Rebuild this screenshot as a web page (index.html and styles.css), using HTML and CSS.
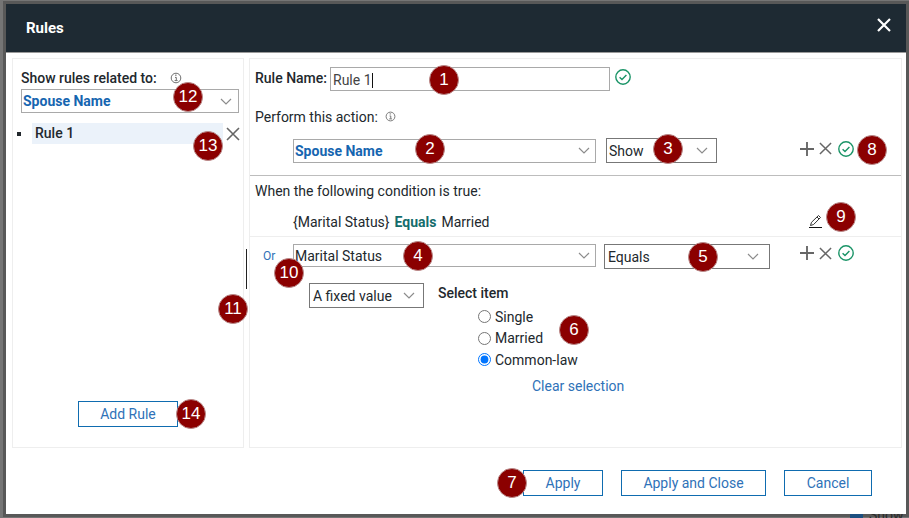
FILE: index.html
```html
<!DOCTYPE html>
<html>
	<head>
		<meta charset="UTF-8">
		<title>Rules</title>
		<link rel="stylesheet" href="styles.css">
	</head>
	<body>
		<svg class="defs" width="0" height="0">
			<symbol id="chev" viewBox="0 0 12 7"><path d="M1 1l5 5 5-5" fill="none" stroke="#8c8c8c" stroke-width="1.2"/></symbol>
			<symbol id="info" viewBox="0 0 12 12"><circle cx="6" cy="6" r="4.8" fill="none" stroke="#6f6f6f"/><path d="M5 3.2h1.6M5 5.4h1.3v3M4.6 8.6h3" fill="none" stroke="#6f6f6f"/></symbol>
			<symbol id="ok" viewBox="0 0 16 16"><circle cx="8" cy="8" r="7.2" fill="none" stroke="#1a9467" stroke-width="1.4"/><path d="M4.6 8.2l2.4 2.4 4.4-4.6" fill="none" stroke="#1a9467" stroke-width="1.4"/></symbol>
			<symbol id="plus" viewBox="0 0 15 15"><path d="M7.5 0v15M0 7.5h15" fill="none" stroke="#666" stroke-width="2"/></symbol>
			<symbol id="cross" viewBox="0 0 14 14"><path d="M1 1l12 12M13 1L1 13" fill="none" stroke="#666" stroke-width="1.6"/></symbol>
		</svg>

		<div class="modal">
			<div class="modal-head">
				<h1>Rules</h1>
				<svg class="close" width="14" height="14"><path d="M1 1l12 12M13 1L1 13" fill="none" stroke="#fff" stroke-width="2.2"/></svg>
			</div>

			<div class="modal-body">
				<!-- left side: list of rules -->
				<div class="panel side">
					<div class="side-title">
						<b>Show rules related to:</b>
						<svg width="12" height="12"><use href="#info"/></svg>
					</div>
					<div class="sel sel-side">
						<span class="blue-bold">Spouse Name</span>
						<svg width="12" height="7"><use href="#chev"/></svg>
					</div>
					<div class="rule-row">
						<i class="bullet"></i>
						<div class="rule-item">Rule 1</div>
						<svg width="14" height="14"><use href="#cross"/></svg>
					</div>
					<div class="side-foot">
						<button class="btn btn-add">Add Rule</button>
					</div>
				</div>

				<!-- right side: the rule editor -->
				<div class="panel editor">
					<div class="name-row">
						<b>Rule Name:</b>
						<div class="name-input">Rule 1<i class="caret"></i></div>
						<svg class="name-ok" width="16" height="16"><use href="#ok"/></svg>
					</div>
					<div class="action-label">
						<span>Perform this action:</span>
						<svg width="11" height="11"><use href="#info"/></svg>
					</div>
					<div class="action-row">
						<div class="sel sel-wide">
							<span class="blue-bold">Spouse Name</span>
							<svg width="12" height="7"><use href="#chev"/></svg>
						</div>
						<div class="sel sel-show">
							<span>Show</span>
							<svg width="12" height="7"><use href="#chev"/></svg>
						</div>
						<div class="tools">
							<svg width="14" height="14"><use href="#plus"/></svg>
							<svg width="13" height="13"><use href="#cross"/></svg>
							<svg width="16" height="16"><use href="#ok"/></svg>
						</div>
					</div>

					<div class="cond-box">
						<div class="cond-title">When the following condition is true:</div>
						<div class="cond-row">
							<span>{Marital Status}</span>
							<b class="green">Equals</b>
							<span>Married</span>
							<svg class="pencil" width="15" height="15" viewBox="0 0 15 15"><path d="M2.500 11.500l1-3.200 7-6.800 2 2-6.900 7z" fill="none" stroke="#333" stroke-width="1"/><path d="M9 3l2 2" fill="none" stroke="#333"/><path d="M1 13.500h13" stroke="#111" stroke-width="1"/></svg>
						</div>
					</div>

					<div class="or-box">
						<div class="or-row">
							<a class="or-link">Or</a>
							<div class="sel sel-wide sel-field">
								<span>Marital Status</span>
								<svg width="12" height="7"><use href="#chev"/></svg>
							</div>
							<div class="sel sel-equals">
								<span>Equals</span>
								<svg width="12" height="7"><use href="#chev"/></svg>
							</div>
							<div class="tools tools-or">
								<svg width="14" height="14"><use href="#plus"/></svg>
								<svg width="13" height="13"><use href="#cross"/></svg>
								<svg width="16" height="16"><use href="#ok"/></svg>
							</div>
						</div>
						<div class="value-row">
							<div class="sel sel-fixed">
								<span>A fixed value</span>
								<svg width="12" height="7"><use href="#chev"/></svg>
							</div>
							<div class="value-pick">
								<div class="pick-title">Select item</div>
								<div class="radios">
									<label><input type="radio" name="item">Single</label>
									<label><input type="radio" name="item">Married</label>
									<label><input type="radio" name="item" checked>Common-law</label>
								</div>
								<a class="clear">Clear selection</a>
							</div>
						</div>
					</div>
				</div>
				<i class="or-line"></i>
			</div>

			<div class="modal-foot">
				<button class="btn btn-apply">Apply</button>
				<button class="btn btn-close">Apply and Close</button>
				<button class="btn btn-cancel">Cancel</button>
			</div>

			<!-- numbered callouts on top of the screenshot -->
			<span class="num n1">1</span>
			<span class="num n2">2</span>
			<span class="num n3">3</span>
			<span class="num n4">4</span>
			<span class="num n5">5</span>
			<span class="num n6">6</span>
			<span class="num n7">7</span>
			<span class="num n8">8</span>
			<span class="num n9">9</span>
			<span class="num n10">10</span>
			<span class="num n11">11</span>
			<span class="num n12">12</span>
			<span class="num n13">13</span>
			<span class="num n14">14</span>
		</div>

		<!-- bit of the page under the dialog -->
		<div class="under">
			<i class="under-check"></i>
			<span>Show</span>
		</div>
	</body>
</html>
```

FILE: styles.css
```css
*{
	box-sizing: border-box;
}
html, body{
	height: 100%;
}
body{
	margin: 0;
	padding: 4px 3px 0 6px;
	background-color: #757575;
	font-family: Roboto, "Liberation Sans", sans-serif;
	font-size: 14px;
	color: #22282d;
	overflow: hidden;
}
svg{
	display: block;
	flex: none;
}
.defs{
	position: absolute;
}
b{
	font-weight: 500;
}

.modal{
	position: relative;
	height: 510px;
	background-color: #fff;
	display: flex;
	flex-direction: column;
	box-shadow: 0 0 0 3px #585858;
}
.modal-head{
	height: 49px;
	background-color: #1e2a33;
	border-bottom: 1px solid #9a9a9a;
	padding: 0 15px 0 20px;
	display: flex;
	align-items: center;
	justify-content: space-between;
	flex: none;
}
.modal-head h1{
	margin: 0;
	font-size: 15px;
	font-weight: 700;
	color: #fff;
}
.close{
	margin-top: -6px;
}

.modal-body{
	position: relative;
	display: flex;
	gap: 5px;
	padding: 5px 4px 0 6px;
}
.panel{
	height: 390px;
	border: 1px solid #eeeeee;
}

/* left */
.side{
	width: 232px;
	padding: 10px 2px 0 8px;
	display: flex;
	flex-direction: column;
}
.side-title{
	display: flex;
	align-items: center;
	gap: 13px;
	height: 17px;
}
.sel{
	display: flex;
	align-items: center;
	justify-content: space-between;
	border: 1px solid #a9a9a9;
	padding: 0 5px 0 1px;
	height: 24px;
}
.sel-side{
	margin-top: 3px;
	width: 218px;
	padding: 0 6px 0 1px;
}
.blue-bold{
	color: #1565b0;
	font-weight: 700;
}
.rule-row{
	display: flex;
	align-items: center;
	margin-top: 10px;
}
.bullet{
	width: 4px;
	height: 4px;
	flex: none;
	background-color: #22282d;
	margin: 0 11px 0 -4px;
}
.rule-item{
	width: 191px;
	height: 21px;
	flex: none;
	line-height: 20px;
	padding-left: 3px;
	background-color: #ebf2fa;
	font-weight: 500;
	margin-right: 3px;
}
.side-foot{
	margin-top: auto;
	padding: 0 0 20px 57px;
}
.btn{
	height: 26px;
	background-color: #fff;
	border: 1px solid #0f6cb0;
	color: #2f72b8;
	font-family: Roboto, "Liberation Sans", sans-serif;
	font-size: 14px;
	padding: 0;
}
.btn-add{
	width: 100px;
}

/* right */
.editor{
	width: 653px;
}
.name-row{
	display: flex;
	align-items: center;
	padding: 8px 0 0 5px;
}
.name-row b{
	margin-bottom: 2px;
}
.name-input{
	margin-left: 3px;
	width: 280px;
	height: 24px;
	line-height: 24px;
	border: 1px solid #a9a9a9;
	padding-left: 2px;
	margin-right: 5px;
	color: #444;
}
.name-ok{
	margin-top: -4px;
}
.caret{
	display: inline-block;
	width: 1px;
	height: 15px;
	background-color: #111;
	vertical-align: -3px;
}
.action-label{
	display: flex;
	align-items: center;
	gap: 7px;
	padding: 17px 0 0 5px;
	height: 34px;
}
.action-row{
	display: flex;
	align-items: center;
	padding: 13px 0 0 43px;
}
.sel-wide{
	width: 303px;
}
.sel-show{
	margin-left: 10px;
	width: 111px;
	height: 25px;
	border-color: #777;
	padding-left: 2px;
	padding-right: 8px;
}
.tools{
	display: flex;
	align-items: center;
	gap: 5px;
	margin: -4px 0 0 83px;
}
.tools svg:last-child{
	margin-left: 1px;
}
.cond-box{
	margin-top: 12px;
	border-top: 1px solid #bdbdbd;
	padding: 7px 0 0 5px;
	height: 62px;
	border-bottom: 1px solid #eeeeee;
}
.cond-title{
	height: 17px;
	line-height: 17px;
}
.cond-row{
	display: flex;
	align-items: center;
	gap: 5px;
	padding: 14px 0 0 38px;
}
.green{
	color: #146c6c;
	font-weight: 700;
}
.pencil{
	margin: -1px 0 0 313px;
}
.or-row{
	display: flex;
	align-items: flex-start;
	padding: 7px 0 0 13px;
}
.or-link{
	color: #2f72b8;
	font-size: 12px;
	width: 30px;
	line-height: 24px;
}
.sel-field{
	height: 23px;
}
.sel-equals{
	margin-left: 8px;
	width: 166px;
	height: 25px;
	border-color: #777;
	padding: 0 10px 0 3px;
}
.tools-or{
	margin: 1px 0 0 30px;
	height: 16px;
}
.value-row{
	display: flex;
	align-items: flex-start;
	padding: 14px 0 0 59px;
}
.sel-fixed{
	width: 115px;
	height: 25px;
	border-color: #777;
	padding: 0 8px 0 3px;
}
.value-pick{
	margin-left: 14px;
	padding-top: 2px;
}
.pick-title{
	font-weight: 500;
	line-height: 17px;
}
.radios{
	display: flex;
	flex-direction: column;
	padding: 4px 0 0 40px;
}
.radios label{
	display: flex;
	align-items: center;
	gap: 4px;
	height: 21.500px;
}
.radios input{
	margin: 0;
	width: 13px;
	height: 13px;
}
.clear{
	display: block;
	margin: 7px 0 0 94px;
	color: #2f72b8;
}
.or-line{
	position: absolute;
	left: 240px;
	top: 196px;
	width: 1px;
	height: 40px;
	background-color: #222;
}

.modal-foot{
	display: flex;
	padding: 22px 0 0 517px;
}
.btn-apply{
	width: 80px;
}
.btn-close{
	width: 145px;
	margin-left: 18px;
}
.btn-cancel{
	width: 88px;
	margin-left: 18px;
}

/* callouts */
.num{
	position: absolute;
	width: 30px;
	height: 30px;
	border-radius: 50%;
	background-color: #8b0000;
	border: 1px solid #b98a8a;
	color: #fff;
	font-family: "Liberation Sans", sans-serif;
	font-size: 17px;
	line-height: 28px;
	text-align: center;
}
.n1{ left: 423px; top: 61px; }
.n2{ left: 409px; top: 130px; }
.n3{ left: 647px; top: 130px; }
.n4{ left: 397px; top: 237px; }
.n5{ left: 682px; top: 238px; }
.n6{ left: 553px; top: 311px; }
.n7{ left: 491px; top: 464px; }
.n8{ left: 851px; top: 131px; }
.n9{ left: 820px; top: 198px; }
.n10{ left: 268px; top: 254px; }
.n11{ left: 212px; top: 290px; }
.n12{ left: 167px; top: 78px; }
.n13{ left: 187px; top: 127px; }
.n14{ left: 170px; top: 395px; }

.under{
	position: absolute;
	left: 850px;
	top: 507px;
	display: flex;
	align-items: center;
	gap: 6px;
	color: #2a2a2a;
	font-size: 14px;
	clip-path: inset(7px 0 0 0);
}
.under-check{
	width: 13px;
	height: 15px;
	background-color: #1c4f80;
}
```
